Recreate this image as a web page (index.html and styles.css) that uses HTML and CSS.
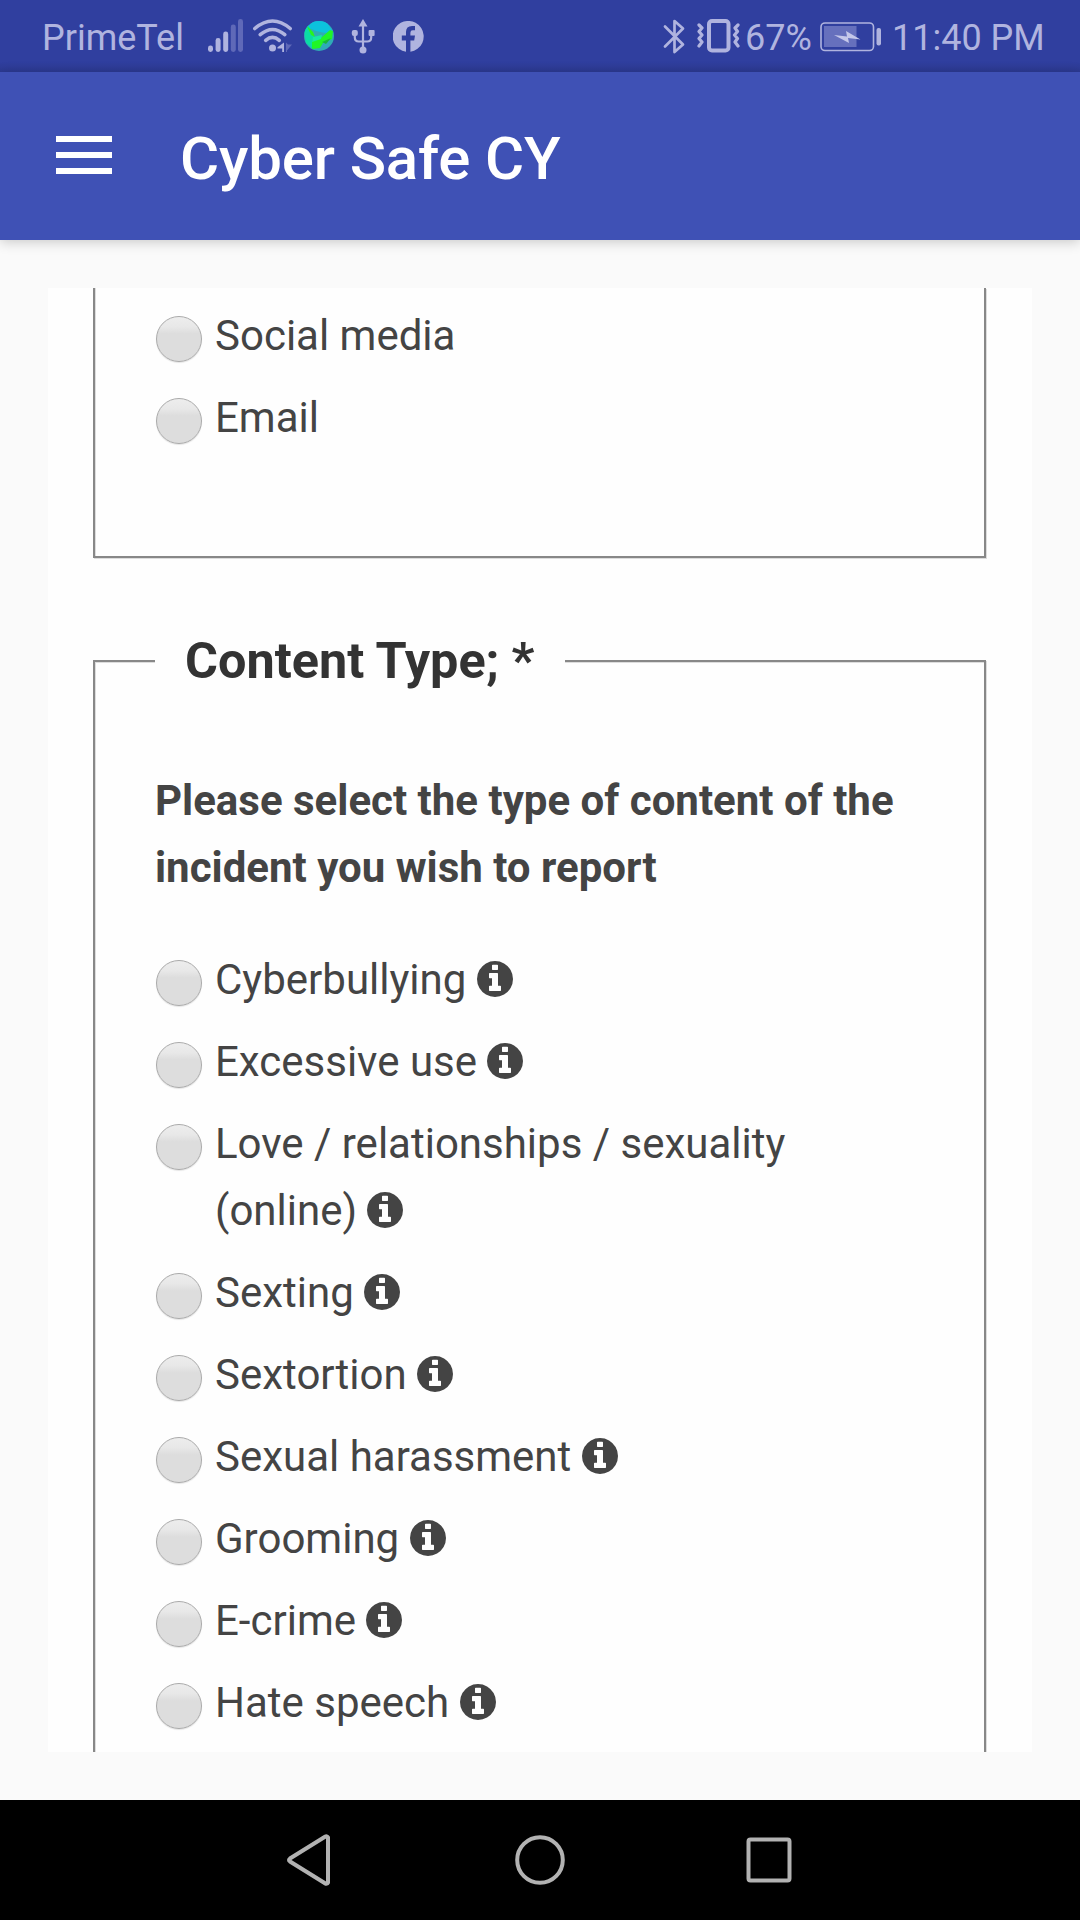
FILE: index.html
```html
<!DOCTYPE html>
<html lang="en">
<head>
<meta charset="utf-8">
<title>Cyber Safe CY</title>
<link rel="stylesheet" href="styles.css">
</head>
<body>
<svg width="0" height="0" class="defs" aria-hidden="true">
  <symbol id="info" viewBox="128 128 1536 1536">
    <path d="M1152 1376v-160q0-14-9-23t-23-9h-96v-512q0-14-9-23t-23-9h-320q-14 0-23 9t-9 23v160q0 14 9 23t23 9h96v320h-96q-14 0-23 9t-9 23v160q0 14 9 23t23 9h448q14 0 23-9t9-23zM1024 480v-160q0-14-9-23t-23-9h-192q-14 0-23 9t-9 23v160q0 14 9 23t23 9h192q14 0 23-9t9-23zM1664 896q0 209-103 385.500t-279.500 279.500t-385.500 103t-385.500-103t-279.500-279.500t-103-385.500t103-385.500t279.500-279.500t385.500-103t385.500 103t279.500 279.500t103 385.500z"/>
  </symbol>
</svg>

<div class="status-bar">
  <span class="carrier">PrimeTel</span>
  <svg class="signal" width="35" height="34" viewBox="0 0 35 34">
    <rect x="0" y="26.500" width="5" height="6.500" rx="2.400"/>
    <rect x="7.600" y="19" width="5" height="14" rx="2.400"/>
    <rect x="15.200" y="12.500" width="5" height="20.500" rx="2.400"/>
    <rect class="dim" x="22.800" y="5.500" width="5" height="27.500" rx="2.400"/>
    <rect class="dim" x="30" y="0" width="5" height="33" rx="2.400"/>
  </svg>
  <svg class="wifi" width="40" height="34" viewBox="0 0 40 34">
    <g class="stroke" stroke-width="3.600">
      <path d="M1.800 9.500Q19.500-5.500 37.200 9.500"/>
      <path d="M7.200 15.700Q19.500 5.300 31.800 15.700"/>
      <path d="M12.700 21.300Q19.500 15.400 26.300 21.300"/>
    </g>
    <circle cx="19.500" cy="29" r="3.500"/>
    <path d="M31 23.500V33h-1.800v-3.500h-4.700v-1.200z"/>
    <path class="dim" d="M33 23.500V33h1v-1.500l5-6h-4z"/>
  </svg>
  <svg class="globe" width="30" height="30" viewBox="0 0 30 30">
    <defs><clipPath id="disc"><circle cx="15" cy="15" r="15"/></clipPath></defs>
    <g clip-path="url(#disc)">
      <rect width="30" height="30" fill="#2fabb6"/>
      <path d="M3 6L10 0h12l7 11-8 1-9-2z" fill="#0cc2dd"/>
      <path d="M0 10l4-6 4 7 3 7-3 9-6-5z" fill="#0bdca5"/>
      <path d="M3 5l6 6 2 5-4-2z" fill="#28f41c"/>
      <path d="M8 19l10-3 8-7 3 1-1 8-9 4-3 5-8 1z" fill="#20f526"/>
      <path d="M9 16l9-2-1 4-9 3z" fill="#18e8a4"/>
      <path d="M18 21l9-4-5 6z" fill="#18b83c"/>
    </g>
  </svg>
  <svg class="usb" width="24" height="35" viewBox="0 0 24 35">
    <path d="M12 0l4.500 7.500h-9z"/>
    <circle cx="12" cy="31" r="3.500"/>
    <rect x="0.800" y="11" width="6" height="6" rx="2"/>
    <rect x="17.600" y="11" width="6" height="6" rx="1"/>
    <path class="stroke" stroke-width="2.200" d="M12 6v24M3.800 15v3.500q0 4 4 4h8.400q4 0 4-4V15"/>
  </svg>
  <svg class="facebook" width="31" height="31" viewBox="0 0 31 31">
    <path d="M13 30.800V19.500H8.800v-5H13v-3.400q0-6 6-6h3v4.200h-2.200q-2.400 0-2.400 2.400v2.800H22l-.8 5h-3.800v11.300A15.500 15.500 0 1 0 13 30.800z"/>
  </svg>
  <svg class="bluetooth" width="22" height="35" viewBox="0 0 22 35">
    <path class="stroke" stroke-width="2.700" stroke-linejoin="round" d="M2 7.500l18 18-8.500 7.500V2L20 9.500l-18 18"/>
  </svg>
  <svg class="vibrate" width="43" height="34" viewBox="0 0 43 34">
    <rect class="stroke" x="12" y="2" width="19.500" height="29.500" rx="3" stroke-width="4"/>
    <path class="stroke" stroke-width="3.200" stroke-linejoin="round" d="M2 6l3 3-3 3.500 3 3.500-3 3.500 3 3.500L2 27M41 6l-3 3 2.500 3.500-3 3.500 3 3.500-2.500 3.500 3 4"/>
  </svg>
  <span class="percent">67%</span>
  <svg class="battery" width="62" height="30" viewBox="0 0 62 30">
    <rect class="stroke" x="1" y="1" width="52.500" height="27.500" rx="4" stroke-width="1.600"/>
    <rect class="charge" x="4" y="4" width="32.500" height="21"/>
    <path class="bolt" d="M14 13l13 1.500L26 9l14.500 8.500L28 16l1 5z"/>
    <rect x="56.500" y="6" width="4.500" height="17.500" rx="2"/>
  </svg>
  <span class="clock">11:40 PM</span>
</div>

<header class="app-bar">
  <div class="menu"><i></i><i></i><i></i></div>
  <h1>Cyber Safe CY</h1>
</header>

<main class="page">
  <div class="card">
    <div class="box box-cut">
      <div class="option"><span class="radio"></span><span>Social media</span></div>
      <div class="option"><span class="radio"></span><span>Email</span></div>
    </div>
    <fieldset class="box group">
      <legend>Content Type; *</legend>
      <p class="prompt">Please select the type of content of the incident you wish to report</p>
      <div class="option"><span class="radio"></span><span>Cyberbullying <svg class="info"><use href="#info"/></svg></span></div>
      <div class="option"><span class="radio"></span><span>Excessive use <svg class="info"><use href="#info"/></svg></span></div>
      <div class="option"><span class="radio"></span><span>Love / relationships / sexuality (online) <svg class="info"><use href="#info"/></svg></span></div>
      <div class="option"><span class="radio"></span><span>Sexting <svg class="info"><use href="#info"/></svg></span></div>
      <div class="option"><span class="radio"></span><span>Sextortion <svg class="info"><use href="#info"/></svg></span></div>
      <div class="option"><span class="radio"></span><span>Sexual harassment <svg class="info"><use href="#info"/></svg></span></div>
      <div class="option"><span class="radio"></span><span>Grooming <svg class="info"><use href="#info"/></svg></span></div>
      <div class="option"><span class="radio"></span><span>E-crime <svg class="info"><use href="#info"/></svg></span></div>
      <div class="option"><span class="radio"></span><span>Hate speech <svg class="info"><use href="#info"/></svg></span></div>
    </fieldset>
  </div>
</main>

<nav class="nav-bar">
  <svg width="47" height="54" viewBox="0 0 47 54"><path d="M42 4.500v45q-1 2-3 .7L4 28.500q-2-1.500 0-3L39 3.800q2-1.300 3 .7z"/></svg>
  <svg width="51" height="54" viewBox="0 0 51 54"><circle cx="26" cy="27" r="22.800"/></svg>
  <svg width="46" height="54" viewBox="0 0 46 54"><rect x="2.500" y="6.500" width="41" height="41" rx="2"/></svg>
</nav>
</body>
</html>
```
FILE: styles.css
```css
* { box-sizing: border-box; }

body {
  margin: 0;
  width: 1080px;
  height: 1920px;
  overflow: hidden;
  display: flex;
  flex-direction: column;
  background: #fafafa;
  color: #444;
  font-family: Roboto, sans-serif;
}

svg { flex: none; }
.defs { display: none; }

/* Android status bar */
.status-bar {
  flex: none;
  height: 72px;
  padding: 0 37px 0 42px;
  display: flex;
  align-items: flex-start;
  background: linear-gradient(#303f9f 62px, #2c3a92 72px);
  color: #b0b4df;
  fill: #b0b4df;
  font-size: 36px;
  line-height: 42px;
}
.status-bar span { flex: none; padding-top: 17px; white-space: nowrap; }
.status-bar svg { margin-top: 19px; }
.stroke { fill: none; stroke: #b0b4df; stroke-linecap: round; }
.dim { fill: #5f69b8; }
.carrier { width: 166px; }
.wifi { margin-left: 10px; }
.status-bar .globe { margin: 21px 0 0 11px; }
.usb { margin-left: 17px; }
.status-bar .facebook { margin: 21px 0 0 18px; }
.bluetooth { margin-left: auto; }
.vibrate { margin-left: 12px; }
.percent { width: 75px; margin-left: 5px; }
.status-bar .battery { margin-top: 22px; }
.charge { fill: #6670bd; }
.bolt { fill: #c5c8ea; }
.clock { width: 151px; margin-left: 10px; }

/* Toolbar */
.app-bar {
  flex: none;
  height: 168px;
  padding-left: 56px;
  display: flex;
  align-items: flex-start;
  gap: 68px;
  background: #3f51b5;
  box-shadow: 0 2px 12px rgba(0, 0, 0, 0.2);
}
.menu { padding-top: 64px; display: flex; flex-direction: column; gap: 10px; }
.menu i { width: 56px; height: 6px; background: #fff; }
.app-bar h1 {
  margin: 0;
  padding-top: 52px;
  color: #fff;
  font-size: 60px;
  line-height: 70px;
  font-weight: 500;
  letter-spacing: -0.150px;
}

.page { flex: 1; min-height: 0; padding: 48px; }
.card {
  height: 1464px;
  padding: 0 46px 0 45px;
  overflow: hidden;
  background: #fefefe;
}

.box {
  min-width: 0;
  margin: 0;
  border: 2px solid #888;
  box-shadow: 1px 1px 0 #ddd, inset 1px 1px 0 #ddd;
  padding: 0 60px;
}
.box-cut {
  height: 270px;
  padding-top: 14px;
  border-top: 0;
  box-shadow: 1px 1px 0 #ddd, inset 1px 0 0 #ddd;
}
.group { margin-top: 63px; padding-top: 66px; padding-bottom: 100px; }

legend {
  padding: 0 31px 0 30px;
  background: #fefefe;
  color: #333;
  font-size: 50.4px;
  font-weight: 700;
  line-height: 80px;
}
.prompt {
  margin: 0 0 45px;
  font-size: 42px;
  font-weight: 700;
  line-height: 67px;
}

.option {
  display: flex;
  align-items: flex-start;
  gap: 13px;
  margin-bottom: 15px;
  font-size: 42px;
  line-height: 67px;
}
.radio {
  flex: none;
  width: 46px;
  height: 46px;
  margin: 14px 0 0 1px;
  border: 1px solid #aaa;
  border-radius: 50%;
  background: linear-gradient(#ededed, #e8e8e8 22%, #ddd 38%);
  box-shadow: 0 1px 1px #e4e4e4;
}
.info {
  width: 36px;
  height: 36px;
  fill: #444;
  vertical-align: -3px;
}

/* Android navigation bar */
.nav-bar {
  flex: none;
  height: 120px;
  padding: 33px 0 0 286px;
  display: flex;
  gap: 181px;
  background: #000;
}
.nav-bar path, .nav-bar circle, .nav-bar rect { fill: none; stroke: #b2b2b2; stroke-width: 4; }
```
